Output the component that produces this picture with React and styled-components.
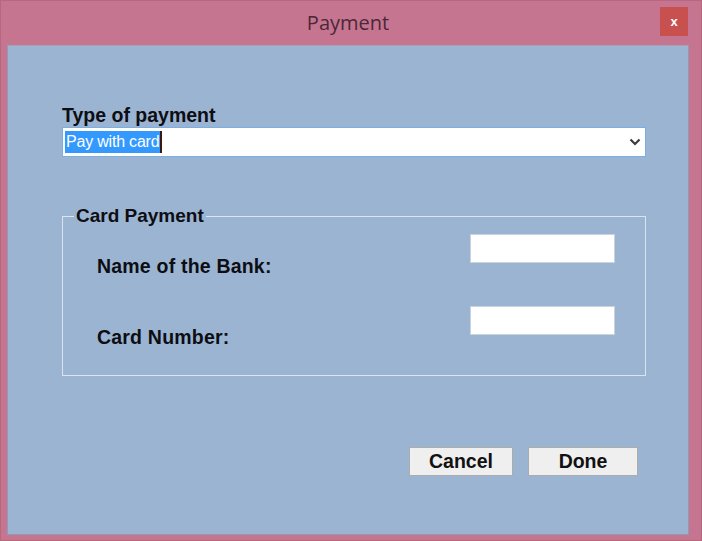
import styled, { createGlobalStyle } from "styled-components";

const GlobalStyle = createGlobalStyle`
  html, body {
    margin: 0;
    padding: 0;
    overflow: hidden;
  }
`;

const Window = styled.div`
  display: flex;
  flex-direction: column;
  width: 702px;
  height: 541px;
  box-sizing: border-box;
  background-color: #c67591;
  border: 1px solid #b8677f;
`;

const TitleBar = styled.div`
  display: grid;
  grid-template-columns: 1fr auto 1fr;
  align-items: center;
  height: 44px;
`;

const Title = styled.div`
  grid-column: 2;
  margin-top: -2px;
  margin-left: -6px;
  font-family: "Open Sans", "Noto Sans", sans-serif;
  font-size: 20px;
  color: #4b2838;
`;

const CloseButton = styled.div`
  grid-column: 3;
  justify-self: end;
  display: flex;
  align-items: center;
  justify-content: center;
  width: 28px;
  height: 29px;
  margin-right: 13px;
  margin-top: -3px;
  background-color: #c8504f;
  color: #fff;
  font-family: "Liberation Sans", Arial, sans-serif;
  font-weight: bold;
  font-size: 13px;
`;

const Client = styled.div`
  display: flex;
  flex-direction: column;
  width: 682px;
  height: 490px;
  margin-left: 6px;
  box-sizing: border-box;
  padding: 0 42px 0 54px;
  background-color: #9ab4d2;
  border: 1px solid #8e9ab6;
  border-top-color: #a9a0b8;
`;

const FieldLabel = styled.div`
  margin-top: 59px;
  font-family: "Liberation Sans", Arial, sans-serif;
  font-weight: bold;
  font-size: 19.5px;
  line-height: 21px;
  color: #0d0d12;
`;

const Combo = styled.div`
  display: flex;
  align-items: center;
  justify-content: space-between;
  height: 30px;
  margin-top: 1px;
  box-sizing: border-box;
  padding: 0 4px 0 2px;
  background-color: #fff;
  border: 1px solid #7aaee4;
`;

const Selected = styled.span`
  display: inline-block;
  padding: 1px 1px 2px 1px;
  background-color: #3399ff;
  color: #fff;
  font-family: "Liberation Sans", Arial, sans-serif;
  font-size: 16px;
  line-height: 19px;
  letter-spacing: -0.2px;
  border-right: 2px solid #3a1a10;
`;

const Group = styled.fieldset`
  margin: 51px 0 0 0;
  padding: 10px 30px 0 11px;
  height: 168px;
  box-sizing: border-box;
  border: 1px solid #dbe5f1;
  display: flex;
  flex-direction: column;
  gap: 29px;
`;

const Legend = styled.legend`
  padding: 0 2px;
  font-family: "Liberation Sans", Arial, sans-serif;
  font-weight: bold;
  font-size: 19px;
  line-height: 16px;
  color: #0d0d12;
`;

const Row = styled.div`
  display: flex;
  justify-content: space-between;
  align-items: flex-start;
  margin-left: 23px;
`;

const RowLabel = styled.div`
  padding-top: ${(p) => p.$offset}px;
  font-family: "Liberation Sans", Arial, sans-serif;
  font-weight: bold;
  font-size: 19.5px;
  line-height: 22px;
  letter-spacing: 0.2px;
  color: #0d0d12;
`;

const TextBox = styled.div`
  width: 145px;
  height: 29px;
  box-sizing: border-box;
  background-color: #fff;
  border: 1px solid #c9d2dd;
`;

const Buttons = styled.div`
  display: flex;
  justify-content: flex-end;
  gap: 15px;
  margin: 71px 8px 0 0;
`;

const Button = styled.div`
  display: flex;
  align-items: center;
  justify-content: center;
  width: ${(p) => p.$width}px;
  height: 29px;
  box-sizing: border-box;
  background-color: #efefef;
  border: 1px solid #acacac;
  font-family: "Liberation Sans", Arial, sans-serif;
  font-weight: bold;
  font-size: 19.5px;
  color: #111;
`;

const Chevron = () => (
  <svg width="12" height="8" viewBox="0 0 12 8">
    <path d="M1.5 1.5 L6 6 L10.5 1.5" fill="none" stroke="#3c3c3c" strokeWidth="2.2" />
  </svg>
);

const App = () => {
  return (
    <>
      <GlobalStyle />
      <Window>
        <TitleBar>
          <Title>Payment</Title>
          <CloseButton>x</CloseButton>
        </TitleBar>
        <Client>
          <FieldLabel>Type of payment</FieldLabel>
          <Combo>
            <Selected>Pay with card</Selected>
            <Chevron />
          </Combo>
          <Group>
            <Legend>Card Payment</Legend>
            <Row>
              <RowLabel $offset={21}>Name of the Bank:</RowLabel>
              <TextBox />
            </Row>
            <Row>
              <RowLabel $offset={20}>Card Number:</RowLabel>
              <TextBox />
            </Row>
          </Group>
          <Buttons>
            <Button $width={104}>Cancel</Button>
            <Button $width={110}>Done</Button>
          </Buttons>
        </Client>
      </Window>
    </>
  );
};

export default App;
